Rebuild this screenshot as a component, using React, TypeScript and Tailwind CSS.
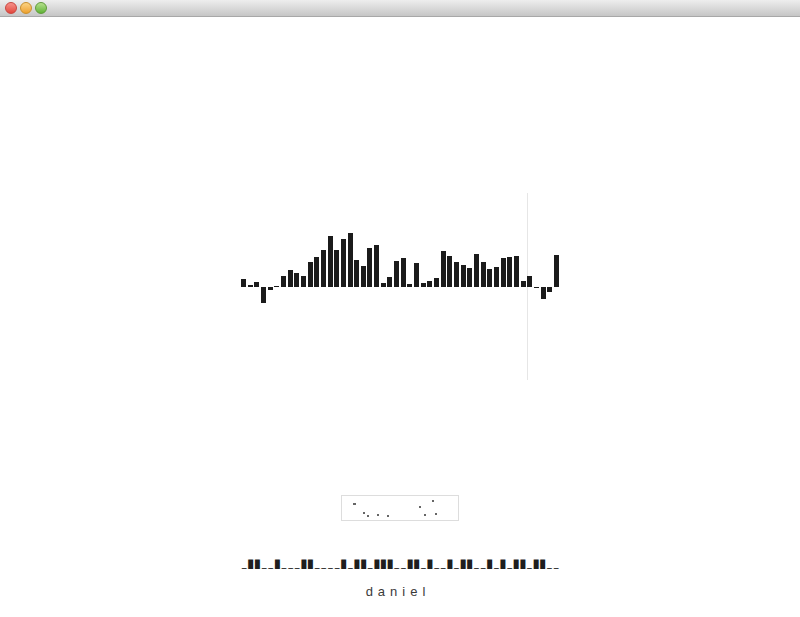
import { type FC } from "react";

// bar values in px, positive up from the baseline, negative down
const bars: number[] = [
	8, 2, 5, -16, -3, 1, 11, 17, 14, 11, 25, 30, 37, 51, 37, 48, 54, 27, 21, 39, 42, 4, 10, 26,
	29, 3, 24, 4, 6, 9, 36, 31, 25, 22, 19, 33, 25, 18, 20, 29, 30, 31, 6, 11, -1, -12, -5, 32,
];

const bits = "_██__█___██____█_██_███__██_█__█_██__█_█_██_██__";

const dots: { x: number; y: number; w?: number }[] = [
	{ x: 11, y: 7, w: 3 },
	{ x: 21, y: 16 },
	{ x: 25, y: 19 },
	{ x: 35, y: 18 },
	{ x: 45, y: 19 },
	{ x: 77, y: 10 },
	{ x: 90, y: 4 },
	{ x: 82, y: 18 },
	{ x: 93, y: 17 },
];

const TitleBar: FC = () => (
	<div className="h-[17px] flex items-center gap-[3px] pl-[5px] bg-gradient-to-b from-[#eeeeee] to-[#c6c6c6] border-b border-[#a8a8a8]">
		<span className="w-[12px] h-[12px] rounded-full border border-[#c8463f] bg-gradient-to-b from-[#f6908a] to-[#e2453c]" />
		<span className="w-[12px] h-[12px] rounded-full border border-[#c98f2c] bg-gradient-to-b from-[#fbd382] to-[#eda129]" />
		<span className="w-[12px] h-[12px] rounded-full border border-[#5f9a3a] bg-gradient-to-b from-[#b6e08c] to-[#5fb334]" />
	</div>
);

const Chart: FC = () => (
	<div className="relative w-[318px] h-[187px] flex justify-between">
		<div className="absolute left-[286px] top-0 h-full w-px bg-[#e6e6e6]" />
		{bars.map((v, i) => (
			<div key={i} className="relative w-[5px] h-full flex flex-col">
				<div className="h-[94px] flex items-end">
					{v > 0 && <div className="w-full bg-[#1b1b1b]" style={{ height: v }} />}
				</div>
				<div className="flex-1">
					{v < 0 && <div className="w-full bg-[#1b1b1b]" style={{ height: -v }} />}
				</div>
			</div>
		))}
	</div>
);

export default function App() {
	return (
		<div className="w-[800px] h-[617px] bg-white overflow-hidden">
			<TitleBar />
			<div className="flex flex-col items-center pt-[176px]">
				<Chart />
				<div className="relative mt-[115px] w-[118px] h-[26px] border border-[#dddddd]">
					{dots.map((d, i) => (
						<span
							key={i}
							className="absolute h-[2px] bg-[#666666]"
							style={{ left: d.x, top: d.y, width: d.w ?? 2 }}
						/>
					))}
				</div>
				<div
					className="mt-[39px] pl-[2px] text-[8px] font-bold leading-[10px] tracking-[1.82px] text-[#1e1e1e] whitespace-pre"
					style={{ fontFamily: "'DejaVu Sans Mono', monospace" }}
				>
					{bits}
				</div>
				<div
					className="mt-[14px] mr-[4px] text-[13px] leading-[16px] tracking-[5px] text-[#3a3a3a]"
					style={{ fontFamily: "'Liberation Sans', Arial, sans-serif" }}
				>
					daniel
				</div>
			</div>
		</div>
	);
}
